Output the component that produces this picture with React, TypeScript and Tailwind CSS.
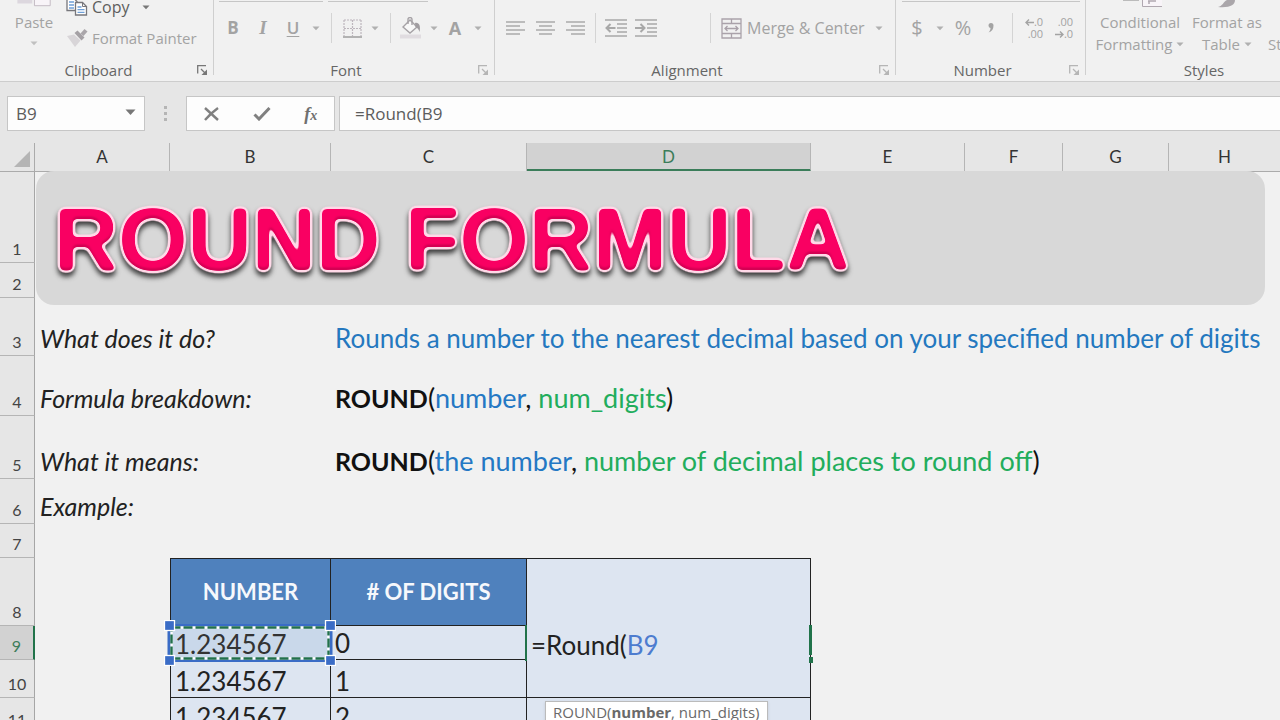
import type { ReactNode } from "react";

const ribbonFont = "font-['Open_Sans','Noto_Sans',sans-serif]";

function Caret({ className = "text-[#b0b0b0]" }: { className?: string }) {
  return (
    <svg viewBox="0 0 8 5" className={`h-[5px] w-2 ${className}`} aria-hidden="true">
      <path d="M0.5 0.5h7L4 4.2z" fill="currentColor" />
    </svg>
  );
}

function CaretButton({ label }: { label: string }) {
  return (
    <button type="button" aria-label={label} className="flex h-7 w-4 items-center justify-center">
      <Caret />
    </button>
  );
}

function Tool({ label, className = "", children }: { label: string; className?: string; children: ReactNode }) {
  return (
    <button type="button" aria-label={label} className={`flex h-7 w-[26px] items-center justify-center ${className}`}>
      {children}
    </button>
  );
}

function Divider({ className = "" }: { className?: string }) {
  return <span className={`h-[30px] w-px bg-[#d4d4d4] ${className}`} />;
}

function Launcher({ className = "text-[#b5b5b5]" }: { className?: string }) {
  return (
    <button type="button" aria-label="More options" className={className}>
      <svg viewBox="0 0 11 11" className="size-[11px]" fill="none" stroke="currentColor" strokeWidth="1.3">
        <path d="M0.7 8.5V0.7H9" />
        <path d="M4 4l4 4" />
        <path d="M10 4.5V10H4.5z" fill="currentColor" stroke="none" />
      </svg>
    </button>
  );
}

function Group({
  title,
  className = "",
  launcher,
  children,
}: {
  title: string;
  className?: string;
  launcher?: ReactNode;
  children: ReactNode;
}) {
  return (
    <section aria-label={title} className={`flex h-[75px] shrink-0 flex-col border-r border-[#cfcfcf] ${className}`}>
      <div className="h-[60px] w-full shrink-0">{children}</div>
      <div className="flex h-5 shrink-0 items-center pr-[5px] text-[#666]">
        <span className="flex-1 text-center text-[15px] leading-5">{title}</span>
        {launcher}
      </div>
    </section>
  );
}

function AlignIcon({ kind }: { kind: "left" | "center" | "right" }) {
  const d = {
    left: "M0 1h19M0 5h14M0 9h19M0 13h14",
    center: "M0 1h19M3 5h13M0 9h19M3 13h13",
    right: "M0 1h19M5 5h14M0 9h19M5 13h14",
  }[kind];
  return (
    <svg viewBox="0 0 19 14" className="h-[14px] w-[19px]" stroke="#ababab" strokeWidth="1.4" fill="none">
      <path d={d} />
    </svg>
  );
}

function IndentIcon({ out }: { out?: boolean }) {
  return (
    <svg viewBox="0 0 22 18" className="h-[18px] w-[22px]" stroke="#a8a8a8" strokeWidth="1.4" fill="none">
      <path d="M0 1h22M12 5h10M12 9h10M12 13h10M0 17h22" />
      <path d={out ? "M1.5 9h9M5.5 5L1.5 9l4 4" : "M0 9h9M5.5 5l4 4-4 4"} strokeWidth="2" />
    </svg>
  );
}

function Ribbon() {
  return (
    <header className={`flex h-[82px] overflow-hidden border-b border-[#cdcdcd] bg-[#f1f1f1] text-[#a3a3a3] ${ribbonFont}`}>
      <Group title="Clipboard" className="w-[214px]" launcher={<Launcher className="text-[#777]" />}>
        <div className="flex">
          <button type="button" className="ml-3 flex w-11 flex-col items-center text-[15px] leading-5">
            <svg viewBox="0 0 40 8" className="h-[7px] w-10" aria-hidden="true">
              <path d="M1 0h17v4H1z" fill="#dcd7de" />
              <path d="M20.5 -1v7.5h18v-7.5" fill="#f8f4f8" stroke="#bdb4bd" />
            </svg>
            <span className="mt-[5px]">Paste</span>
            <Caret className="mt-[9px] text-[#c0c0c0]" />
          </button>
          <div className="ml-2.5 flex flex-col">
            <button type="button" className="flex h-[14px] items-center text-base leading-[14px] text-[#5e5e5e]">
              <svg viewBox="0 0 22 18" className="mr-1 h-[18px] w-[22px]" aria-hidden="true">
                <path d="M1 0.500h7l3 3v9H1z" fill="#fff" stroke="#77777c" strokeWidth="1.300" />
                <path d="M3 4h5M3 7h5M3 10h5" stroke="#6fa0d8" strokeWidth="1.300" />
                <path d="M9.500 4.500h7l4 4v8.500h-11z" fill="#fff" stroke="#77777c" strokeWidth="1.300" />
                <path d="M16.500 4.500v4h4" fill="none" stroke="#77777c" />
                <path d="M11.500 9h4M11.500 11.700h7M11.500 14.400h7" stroke="#6fa0d8" strokeWidth="1.300" />
              </svg>
              <span>Copy</span>
              <Caret className="ml-3 text-[#777]" />
            </button>
            <button type="button" className="mt-3.5 flex h-5 items-center text-[15px] leading-5">
              <svg viewBox="0 0 22 20" className="mr-1 h-5 w-[22px]" aria-hidden="true">
                <path d="M1 8l7-1.500 6.500 6-5.500 6.500z" fill="#d8d5d8" />
                <path d="M8.500 5l3-2.500 7 7-3 3z" fill="#a5a1a5" />
                <path d="M14.500 5.500l4-4.500 3 2.500-4 4.500z" fill="#aaa6aa" />
              </svg>
              <span className="whitespace-nowrap">Format Painter</span>
            </button>
          </div>
        </div>
      </Group>

      <Group title="Font" className="w-[281px]" launcher={<Launcher />}>
        <div className="ml-[5px] flex h-0.5 gap-[5px]">
          <span className="w-[104px] border-b border-[#c6c6c6]" />
          <span className="w-[100px] border-b border-[#c6c6c6]" />
        </div>
        <div className="flex h-[52px] items-center pl-1.5 text-[17px]">
          <Tool label="Bold" className="mr-1 font-bold">B</Tool>
          <Tool label="Italic" className="mr-1 font-['Liberation_Serif',serif] text-[19px] font-bold italic">I</Tool>
          <Tool label="Underline" className="mr-0.5 font-semibold underline underline-offset-2">U</Tool>
          <CaretButton label="Underline options" />
          <Divider className="mx-[7px]" />
          <Tool label="Borders" className="mr-0.5">
            <svg viewBox="0 0 19 19" className="size-[19px]" fill="none" stroke="#bdb6bd" strokeWidth="1.200">
              <path d="M1 1h17M1 1v16M18 1v16M9.500 1v16M1 9.500h17" strokeDasharray="2 1" />
              <path d="M0 18h19" stroke="#a3a3a3" strokeWidth="1.600" />
            </svg>
          </Tool>
          <CaretButton label="Border options" />
          <Divider className="mx-[7px]" />
          <Tool label="Fill color" className="mr-0.5">
            <svg viewBox="0 0 22 22" className="size-[22px]" fill="none" stroke="#a6a2a6" strokeWidth="1.400">
              <path d="M3 10l7-7 7 7-7 6z" fill="#f8f8f8" />
              <path d="M8 7V2.500a2 2 0 014 0V8" />
              <path d="M15 6c4-1 6 3 4.500 9-1-3-2-4-4-5z" fill="#a09ca0" stroke="none" />
              <path d="M0 19.500h21" stroke="#e0dce0" strokeWidth="4" />
            </svg>
          </Tool>
          <CaretButton label="Fill options" />
          <Tool label="Font color" className="mr-0.5 text-lg font-bold">A</Tool>
          <CaretButton label="Font color options" />
        </div>
      </Group>

      <Group title="Alignment" className="w-[401px]" launcher={<Launcher />}>
        <div className="flex h-14 items-center pl-[7px]">
          <Tool label="Align left" className="mr-1"><AlignIcon kind="left" /></Tool>
          <Tool label="Center" className="mr-1"><AlignIcon kind="center" /></Tool>
          <Tool label="Align right"><AlignIcon kind="right" /></Tool>
          <Divider className="mx-[7px]" />
          <Tool label="Decrease indent" className="mr-1"><IndentIcon out /></Tool>
          <Tool label="Increase indent"><IndentIcon /></Tool>
          <Divider className="mr-2.5 ml-[51px]" />
          <button type="button" className="flex items-center text-base">
            <svg viewBox="0 0 21 21" className="mr-[5px] size-[21px]" fill="none" stroke="#aaa2aa" strokeWidth="1.300" aria-hidden="true">
              <path d="M1 1h19v19H1zM1 5.500h19M1 15.500h19M10.500 1v4.500M10.500 15.500V20" />
              <path d="M4 10.500h13M6.500 8L4 10.500 6.500 13M14.500 8l2.500 2.500-2.500 2.500" />
            </svg>
            <span className="whitespace-nowrap">Merge &amp; Center</span>
          </button>
          <span className="ml-1.5"><CaretButton label="Merge options" /></span>
        </div>
      </Group>

      <Group title="Number" className="w-[190px]" launcher={<Launcher />}>
        <div className="ml-1.5 h-0.5 w-[178px] border-b border-[#c6c6c6]" />
        <div className="flex h-[52px] items-center pl-2 text-xl">
          <Tool label="Currency">$</Tool>
          <span className="ml-0.5"><CaretButton label="Currency options" /></span>
          <Tool label="Percent" className="mr-0.5 ml-0.5">%</Tool>
          <Tool label="Comma style">
            <svg viewBox="0 0 8 12" className="h-3 w-2" aria-hidden="true">
              <path d="M1.500 3.500a2.500 2.500 0 115 0C6.500 7 5 9.500 1.500 10.500c1.500-1.500 2-3 2-4.500A2.500 2.500 0 011.500 3.500z" fill="#a3a3a3" />
            </svg>
          </Tool>
          <Divider className="mr-2 ml-2" />
          <Tool label="Increase decimal" className="mr-1">
            <span className="flex flex-col items-end text-[11px] leading-3">
              <span className="flex items-center">
                <svg viewBox="0 0 9 7" className="h-[7px] w-[9px]" fill="none" stroke="#a3a3a3" strokeWidth="1.400"><path d="M9 3.500H1M4 0.500l-3 3 3 3" /></svg>
                .0
              </span>
              <span>.00</span>
            </span>
          </Tool>
          <Tool label="Decrease decimal">
            <span className="flex flex-col items-end text-[11px] leading-3">
              <span>.00</span>
              <span className="flex items-center">
                <svg viewBox="0 0 9 7" className="h-[7px] w-[9px]" fill="none" stroke="#a3a3a3" strokeWidth="1.400"><path d="M0 3.500h8M5 0.500l3 3-3 3" /></svg>
                .0
              </span>
            </span>
          </Tool>
        </div>
      </Group>

      <Group title="Styles" className="w-[242px]">
        <div className="flex gap-1 pl-2 text-[15px] leading-[22px]">
          <button type="button" className="flex w-[92px] flex-col items-center whitespace-nowrap">
            <svg viewBox="0 0 44 11" className="h-[11px] w-11" aria-hidden="true">
              <path d="M5 0h16" stroke="#bbb" strokeWidth="2" />
              <path d="M24.500 -1v7.500h20v-7.500" fill="#f8f4f8" stroke="#b0a8b0" />
              <path d="M30 1h8M31 1v3" stroke="#b0a8b0" strokeWidth="1.500" />
            </svg>
            <span>Conditional</span>
            <span className="flex items-center gap-1">Formatting <Caret /></span>
          </button>
          <button type="button" className="flex w-[74px] flex-col items-center whitespace-nowrap">
            <svg viewBox="0 0 20 11" className="h-[11px] w-5" aria-hidden="true">
              <path d="M1 7c5-1 5-5 9-7h8c0 5-5 8-17 7z" fill="#aaa6aa" />
            </svg>
            <span>Format as</span>
            <span className="flex items-center gap-1">Table <Caret /></span>
          </button>
          <button type="button" className="flex flex-col items-center pt-[11px] whitespace-nowrap">
            <span>Cell</span>
            <span className="flex items-center gap-1">Styles <Caret /></span>
          </button>
        </div>
      </Group>
    </header>
  );
}

function FormulaBar() {
  return (
    <div className={`flex h-[61px] items-start bg-[#e6e6e6] pt-3.5 text-[#5c5c5c] ${ribbonFont}`}>
      <div className="ml-[7px] flex h-[35px] w-[138px] shrink-0 items-center border border-[#c6c6c6] bg-[#fdfdfd] pr-2">
        <input aria-label="Name box" defaultValue="B9" className="w-full min-w-0 bg-transparent pl-2 text-[17px] outline-none" />
        <svg viewBox="0 0 11 6" className="mb-1 h-1.5 w-[11px] shrink-0" aria-hidden="true"><path d="M0.500 0.500h10L5.500 6z" fill="#777" /></svg>
      </div>
      <svg viewBox="0 0 3 15" className="mt-2.5 ml-[19px] h-[15px] w-[3px] shrink-0" fill="#b5b5b5" aria-hidden="true">
        <path d="M0 0h3v3H0zM0 6h3v3H0zM0 12h3v3H0z" />
      </svg>
      <div className="ml-[19px] flex h-[35px] w-[149px] shrink-0 items-center justify-around border border-[#c6c6c6] bg-[#fdfdfd]">
        <button type="button" aria-label="Cancel">
          <svg viewBox="0 0 16 14" className="h-3.5 w-4" stroke="#808080" strokeWidth="2.400" fill="none"><path d="M1 1l13 12M14 1Q7 6 1 13" /></svg>
        </button>
        <button type="button" aria-label="Enter">
          <svg viewBox="0 0 18 14" className="h-3.5 w-[18px]" stroke="#808080" strokeWidth="3" fill="none"><path d="M1.500 7.500L6 12 16.500 1" /></svg>
        </button>
        <button type="button" aria-label="Insert function" className="font-['Liberation_Serif',serif] text-lg leading-6 font-bold text-[#707070] italic">
          f<span className="text-sm">x</span>
        </button>
      </div>
      <input
        aria-label="Formula"
        defaultValue="=Round(B9"
        className="ml-[4px] h-[35px] min-w-0 flex-1 border border-r-0 border-[#c6c6c6] bg-[#fdfdfd] pl-[15px] text-[17px] outline-none"
      />
    </div>
  );
}

function TitleBanner() {
  return (
    <div className="absolute top-7 right-[15px] left-[36px] flex h-[134px] items-center rounded-[18px] bg-[#d8d8d8] pt-0.5 pl-[18px]">
      <svg className="absolute size-0" aria-hidden="true">
        <filter id="bevel" x="-5%" y="-20%" width="110%" height="150%" colorInterpolationFilters="sRGB">
          <feGaussianBlur in="SourceAlpha" stdDeviation="2.900" result="soft" />
          <feComponentTransfer in="soft" result="core"><feFuncA type="linear" slope="8" intercept="-3.600" /></feComponentTransfer>
          <feGaussianBlur in="core" stdDeviation="2" result="coreSoft" />
          <feComponentTransfer in="coreSoft" result="rim"><feFuncA type="linear" slope="8" intercept="-0.500" /></feComponentTransfer>
          <feFlood floodColor="#ffd9e8" /><feComposite in2="rim" operator="in" result="rimPaint" />
          <feFlood floodColor="#f90062" /><feComposite in2="core" operator="in" result="corePaint" />
          <feOffset in="core" dy="-2" result="up" />
          <feComposite in="core" in2="up" operator="out" /><feGaussianBlur stdDeviation="1.200" result="lower" />
          <feFlood floodColor="#a3003f" floodOpacity="0.700" /><feComposite in2="lower" operator="in" /><feComposite in2="core" operator="in" result="shade" />
          <feOffset in="rim" dy="4" /><feGaussianBlur stdDeviation="2.400" result="dropShape" />
          <feFlood floodColor="#222" floodOpacity="0.850" /><feComposite in2="dropShape" operator="in" result="drop" />
          <feMerge>
            <feMergeNode in="drop" /><feMergeNode in="rimPaint" /><feMergeNode in="corePaint" /><feMergeNode in="shade" />
          </feMerge>
        </filter>
      </svg>
      <h1 className="font-['Liberation_Sans',Arial,sans-serif] text-[89px] leading-[96px] font-bold whitespace-nowrap text-[#f90062] [filter:url(#bevel)]">
        ROUND FORMULA
      </h1>
    </div>
  );
}

function RangeFrame() {
  const corners = [[5, 5], [166, 5], [5, 40], [166, 40]];
  return (
    <svg viewBox="0 0 172 46" className="pointer-events-none absolute -top-[6px] -left-[7px] z-10 h-[46px] w-[172px]" fill="none" aria-hidden="true">
      <path d="M5.500 6h161v34h-161z" stroke="#3a6cc6" strokeWidth="4" />
      <path d="M7.500 7.500h157v31h-157z" stroke="#fff" strokeWidth="2.400" />
      <path d="M7.500 7.500h157v31h-157z" stroke="#22704c" strokeWidth="2.400" strokeDasharray="9 3" />
      {corners.map(([x, y]) => (
        <rect key={`${x}-${y}`} x={x - 4.5} y={y - 4.5} width="10" height="10" fill="#3a6cc6" stroke="#fff" strokeWidth="1.300" />
      ))}
    </svg>
  );
}

const columns = ["A", "B", "C", "D", "E", "F", "G", "H"];

function RowHead({ n, active }: { n: number; active?: boolean }) {
  return (
    <th
      scope="row"
      className={
        active
          ? "border-r-2 border-b border-r-[#21734a] border-b-[#b5b5b5] bg-[#d2d2d2] pb-[3px] align-bottom text-base leading-5 font-normal text-[#3c7d5a]"
          : "border-r border-b border-r-[#a6a6a6] border-b-[#b5b5b5] bg-[#e6e6e6] pb-[3px] align-bottom text-base leading-5 font-normal text-[#444]"
      }
    >
      {n}
    </th>
  );
}

function NoteRow({ n, height, label, children }: { n: number; height: string; label: string; children?: ReactNode }) {
  return (
    <tr className={height}>
      <RowHead n={n} />
      <td colSpan={2} className="pb-[3px] pl-[5px] align-bottom text-[25px] leading-[30px] whitespace-nowrap text-[#222] italic">{label}</td>
      <td colSpan={6} className="pb-[3px] pl-1 align-bottom text-[27px] leading-[30px] whitespace-nowrap text-[#111]">{children}</td>
    </tr>
  );
}

const valueCell = "border-r border-b border-[#222] bg-[#dde5f1] pb-px pl-1 align-bottom text-[26px] leading-[30px] text-[#222]";
const headCell = "border-t border-r border-b border-[#222] bg-[#4f81bd] text-center align-middle text-[22px] leading-[30px] font-bold whitespace-nowrap text-[#f6f8fc]";

function Sheet() {
  return (
    <main className="relative flex-1 overflow-hidden bg-[#f1f1f1] font-[Lato,'Open_Sans',sans-serif]">
      <table className="w-full table-fixed border-separate border-spacing-0">
        <colgroup>
          <col className="w-[35px]" />
          <col className="w-[135px]" />
          <col className="w-[161px]" />
          <col className="w-[196px]" />
          <col className="w-[284px]" />
          <col className="w-[154px]" />
          <col className="w-[98px]" />
          <col className="w-[106px]" />
          <col />
        </colgroup>
        <thead>
          <tr className="h-7">
            <td aria-label="Select all" className="border-r border-b border-[#ababab] bg-[#e6e6e6]">
              <svg viewBox="0 0 16 16" className="mt-1 ml-3.5 size-4" aria-hidden="true"><path d="M16 0v16H0z" fill="#b5b5b5" /></svg>
            </td>
            {columns.map((c) => (
              <th
                key={c}
                scope="col"
                className={
                  c === "D"
                    ? "border-r border-b-[3px] border-r-[#b5b5b5] border-b-[#3b7d5a] bg-[#d2d2d2] pt-0.5 text-[17px] leading-6 font-normal text-[#3c7d5a]"
                    : "border-r border-b border-r-[#b5b5b5] border-b-[#ababab] bg-[#e6e6e6] text-[17px] leading-6 font-normal text-[#333] last:border-r-0"
                }
              >
                {c}
              </th>
            ))}
          </tr>
        </thead>
        <tbody>
          <tr className="h-[91px]"><RowHead n={1} /><td colSpan={8} /></tr>
          <tr className="h-[35px]"><RowHead n={2} /><td colSpan={8} /></tr>
          <NoteRow n={3} height="h-[58px]" label="What does it do?">
            <span className="text-[26px] text-[#2478bf]">Rounds a number to the nearest decimal based on your specified number of digits</span>
          </NoteRow>
          <NoteRow n={4} height="h-[60px]" label="Formula breakdown:">
            <b className="text-[25px]">ROUND</b>(<span className="text-[#2478c4]">number</span>, <span className="text-[#22ad5c]">num_digits</span>)
          </NoteRow>
          <NoteRow n={5} height="h-[63px]" label="What it means:">
            <b className="text-[25px]">ROUND</b>(<span className="text-[#2478c4]">the number</span>, <span className="text-[#22ad5c]">number of decimal places to round off</span>)
          </NoteRow>
          <NoteRow n={6} height="h-[45px]" label="Example:" />
          <tr className="h-[34px]"><RowHead n={7} /><td colSpan={8} /></tr>
          <tr className="h-[68px]">
            <RowHead n={8} />
            <td />
            <td className={`border-l ${headCell}`}>NUMBER</td>
            <td className={headCell}># OF DIGITS</td>
            <td className="border-t border-r border-[#222] bg-[#dde5f1]" />
            <td colSpan={4} />
          </tr>
          <tr className="h-[34px]">
            <RowHead n={9} active />
            <td />
            <td className="relative border-r border-l border-[#222] bg-[#c9d8ea] pb-px pl-1 align-bottom text-[26px] leading-[30px] text-[#333]">
              1.234567
              <RangeFrame />
            </td>
            <td className={valueCell}>0</td>
            <td className="relative border-r border-[#222] bg-[#dde5f1] pl-1 align-bottom text-[26px] leading-[30px] text-[#222]">
              =Round(<span className="text-[#4d7ccf]">B9</span>
              <span className="absolute -top-px -bottom-px -left-0.5 w-0.5 bg-[#21734a]" />
              <span className="absolute -top-px -right-0.5 bottom-[5px] w-[3px] bg-[#21734a]" />
              <span className="absolute -right-[3px] -bottom-[3px] h-1.5 w-1 bg-[#21734a]" />
            </td>
            <td colSpan={4} />
          </tr>
          <tr className="h-[38px]">
            <RowHead n={10} />
            <td />
            <td className={`border-l ${valueCell}`}>1.234567</td>
            <td className={valueCell}>1</td>
            <td className="border-r border-b border-[#222] bg-[#dde5f1]" />
            <td colSpan={4} />
          </tr>
          <tr className="h-[36px]">
            <RowHead n={11} />
            <td />
            <td className={`border-l ${valueCell}`}>1.234567</td>
            <td className={valueCell}>2</td>
            <td className="relative border-r border-b border-[#222] bg-[#dde5f1]">
              <div
                role="tooltip"
                className={`absolute top-[3px] left-[18px] border border-[#bbb] bg-white px-[7px] text-[15px] leading-5 whitespace-nowrap text-[#6a6a6a] shadow-sm ${ribbonFont}`}
              >
                ROUND(<b>number</b>, num_digits)
              </div>
            </td>
            <td colSpan={4} />
          </tr>
        </tbody>
      </table>
      <TitleBanner />
    </main>
  );
}

export default function App() {
  return (
    <div className="flex h-screen flex-col overflow-hidden bg-[#f1f1f1]">
      <Ribbon />
      <FormulaBar />
      <Sheet />
    </div>
  );
}
